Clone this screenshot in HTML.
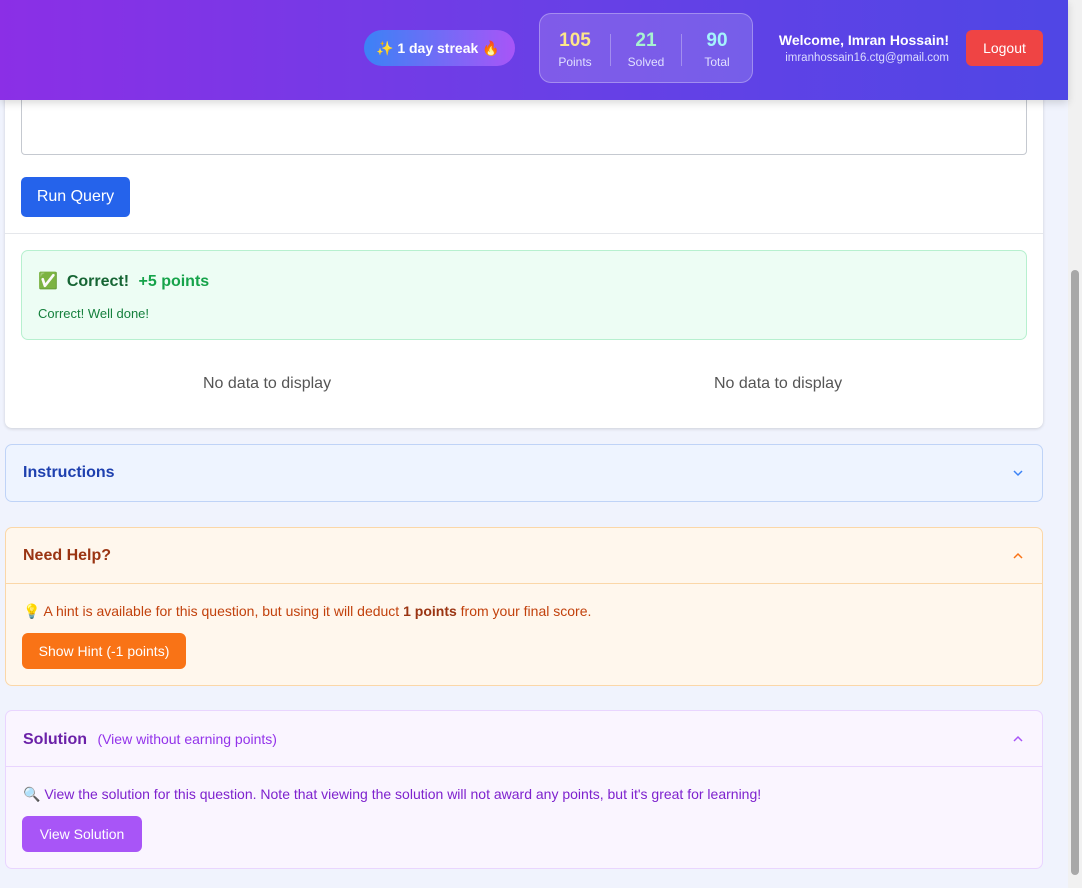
<!DOCTYPE html>
<html><head><style>
*{box-sizing:border-box;margin:0;padding:0}
body{width:1082px;height:888px;overflow:hidden;background:#f0f3fd;font-family:"Liberation Sans","DejaVu Sans",sans-serif;position:relative}
.hdr{position:absolute;left:0;top:0;width:1068px;height:100px;background:linear-gradient(90deg,#8b2fe6,#6a3fe6 50%,#4f46e5);box-shadow:0 3px 8px rgba(0,0,0,.15);z-index:5}
.streak{position:absolute;left:364px;top:30px;width:151px;height:36px;border-radius:18px;background:linear-gradient(90deg,#3b82f6,#a855f7);color:#fff;font-size:14px;font-weight:bold;line-height:36px;padding-left:12px}
.stats{position:absolute;left:539px;top:13px;width:214px;height:70px;border-radius:12px;background:rgba(255,255,255,.15);border:1px solid rgba(255,255,255,.3);display:flex;align-items:center;padding-top:4px}
.st{flex:1;text-align:center}
.st b{display:block;font-size:19px;margin-bottom:1px}
.st span{color:#e0e0ff;font-size:12px}
.sep{width:1px;height:32px;background:rgba(255,255,255,.3)}
.wel{position:absolute;right:119px;top:32px;text-align:right;color:#fff}
.wel b{font-size:14px;display:block}
.wel span{font-size:11.5px;color:#dcdcff}
.logout{position:absolute;left:966px;top:30px;width:77px;height:36px;border-radius:6px;background:#ef4444;color:#fff;font-size:14px;text-align:center;line-height:36px}
.card{position:absolute;left:5px;width:1038px;border-radius:7px}
.main{top:60px;height:368px;background:#fff;box-shadow:0 1px 3px rgba(0,0,0,.15)}
.ta{position:absolute;left:16px;top:0;width:1006px;height:95px;border:1px solid #c5c9d0;border-radius:4px}
.run{position:absolute;left:16px;top:117px;width:109px;height:40px;background:#2563eb;color:#fff;border-radius:5px;font-size:16px;line-height:40px;text-align:center}
.hr{position:absolute;left:0;top:173px;width:1038px;height:1px;background:#e5e7eb}
.ok{position:absolute;left:16px;top:190px;width:1006px;height:90px;background:#edfdf4;border:1px solid #b7f0cf;border-radius:7px}
.nd{position:absolute;top:315px;font-size:16px;color:#555}
.sec-h{height:56px;padding-left:17px;line-height:56px;font-size:16px;font-weight:bold;position:relative}
.chev{position:absolute;right:18px;top:22px;width:12px;height:12px}
</style></head><body>
<div class="hdr">
<div class="streak">✨ 1 day streak 🔥</div>
<div class="stats">
<div class="st"><b style="color:#fde68a">105</b><span>Points</span></div><div class="sep"></div>
<div class="st"><b style="color:#a7f3d0">21</b><span>Solved</span></div><div class="sep"></div>
<div class="st"><b style="color:#a5f3fc">90</b><span>Total</span></div></div>
<div class="wel"><b>Welcome, Imran Hossain!</b><span>imranhossain16.ctg@gmail.com</span></div>
<div class="logout">Logout</div>
</div>
<div class="card main">
<div class="ta"></div>
<div class="run">Run Query</div>
<div class="hr"></div>
<div class="ok">
<div style="position:absolute;left:16px;top:20px;font-size:16px;font-weight:bold;color:#166534">✅&nbsp; Correct! <span style="color:#16a34a;margin-left:5px">+5 points</span></div>
<div style="position:absolute;left:16px;top:55px;font-size:13px;color:#15803d">Correct! Well done!</div></div>
<div class="nd" style="left:198px">No data to display</div>
<div class="nd" style="left:709px">No data to display</div>
</div>
<div class="card" style="top:444px;height:58px;background:#eef4ff;border:1px solid #bfd3f7">
<div class="sec-h" style="color:#1e40af">Instructions<svg class="chev" viewBox="0 0 12 12"><path d="M2 4l4 4 4-4" fill="none" stroke="#3b82f6" stroke-width="1.5"/></svg></div></div>
<div class="card" style="top:527px;height:159px;background:#fff7ed;border:1px solid #fbd7a8">
<div class="sec-h" style="color:#9a3412;border-bottom:1px solid #fbd7a8">Need Help?<svg class="chev" viewBox="0 0 12 12"><path d="M2 8l4-4 4 4" fill="none" stroke="#f97316" stroke-width="1.5"/></svg></div>
<div style="position:absolute;left:17px;top:75px;font-size:14px;color:#c2410c">💡 A hint is available for this question, but using it will deduct <b style="color:#9a3412">1 points</b> from your final score.</div>
<div style="position:absolute;left:16px;top:105px;width:164px;height:36px;background:#f97316;color:#fff;border-radius:6px;font-size:14px;line-height:36px;text-align:center">Show Hint (-1 points)</div></div>
<div class="card" style="top:710px;height:159px;background:#faf5ff;border:1px solid #e9d5ff">
<div class="sec-h" style="color:#6b21a8;border-bottom:1px solid #e9d5ff">Solution <span style="font-weight:normal;font-size:14px;color:#9333ea;margin-left:6px">(View without earning points)</span><svg class="chev" viewBox="0 0 12 12"><path d="M2 8l4-4 4 4" fill="none" stroke="#a855f7" stroke-width="1.5"/></svg></div>
<div style="position:absolute;left:17px;top:75px;font-size:14px;color:#7e22ce">🔍 View the solution for this question. Note that viewing the solution will not award any points, but it's great for learning!</div>
<div style="position:absolute;left:16px;top:105px;width:120px;height:36px;background:#a855f7;color:#fff;border-radius:6px;font-size:14px;line-height:36px;text-align:center">View Solution</div></div>
<div style="position:absolute;left:1068px;top:0;width:14px;height:888px;background:#f1f1f1"></div>
<div style="position:absolute;left:1071px;top:270px;width:8px;height:605px;background:#a8a8a8;border-radius:4px"></div>
</body></html>
